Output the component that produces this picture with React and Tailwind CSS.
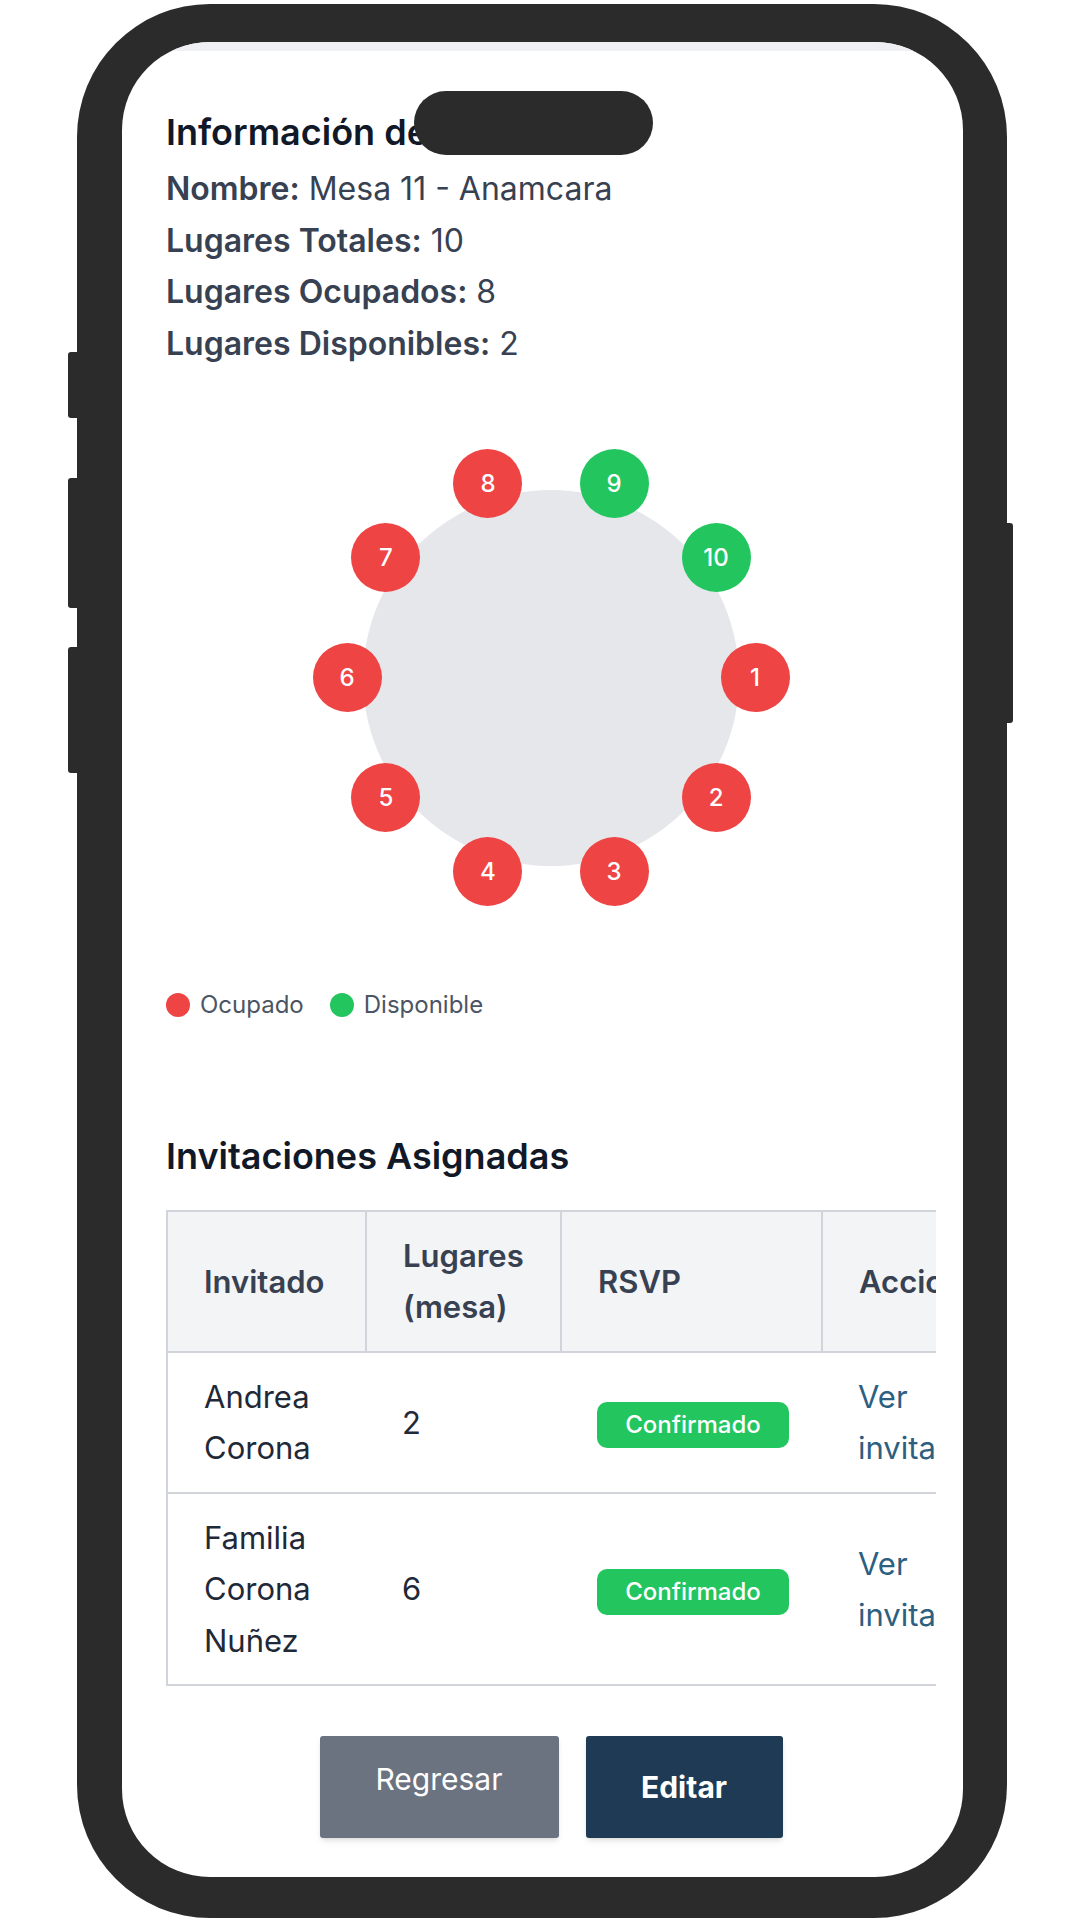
import React from "react";

const asientos = [
  { numero: 1, ocupado: true },
  { numero: 2, ocupado: true },
  { numero: 3, ocupado: true },
  { numero: 4, ocupado: true },
  { numero: 5, ocupado: true },
  { numero: 6, ocupado: true },
  { numero: 7, ocupado: true },
  { numero: 8, ocupado: true },
  { numero: 9, ocupado: false },
  { numero: 10, ocupado: false }
];

const invitaciones = [
  { id: 1, invitado: "Andrea Corona", lugares: 2, rsvp: "Confirmado" },
  { id: 2, invitado: "Familia Corona Nuñez", lugares: 6, rsvp: "Confirmado" }
];

// diagram box 480x460, table centre at (240, 230)
const CENTRO_X = 240;
const CENTRO_Y = 230;
const RADIO = 204;
const ASIENTO = 69;

function Mesa() {
  return (
    <div className="relative mx-auto w-[480px] h-[460px]">
      <div className="absolute left-[52px] top-[42px] w-[376px] h-[376px] rounded-full bg-[#e5e7eb]" />
      {asientos.map(function (asiento) {
        const angulo = ((asiento.numero - 1) * 36 * Math.PI) / 180;
        const x = CENTRO_X + RADIO * Math.cos(angulo) - ASIENTO / 2;
        const y = CENTRO_Y + RADIO * Math.sin(angulo) - ASIENTO / 2;
        return (
          <div
            key={asiento.numero}
            className={
              asiento.ocupado
                ? "absolute w-[69px] h-[69px] rounded-full bg-[#ef4444] flex items-center justify-center text-white text-[24px] font-medium"
                : "absolute w-[69px] h-[69px] rounded-full bg-[#22c55e] flex items-center justify-center text-white text-[24px] font-medium"
            }
            style={{ left: x, top: y }}
          >
            {asiento.numero}
          </div>
        );
      })}
    </div>
  );
}

export default function App() {
  return (
    <div className="w-[1080px] h-[1920px] bg-white overflow-hidden font-['Inter',sans-serif]">
      <div className="relative ml-[77px] mt-[4px] w-[930px] h-[1914px] rounded-[133px] bg-[#2b2b2b] pt-[38px] pl-[45px] pr-[44px] pb-[41px]">
        {/* side buttons */}
        <div className="absolute left-[-9px] top-[348px] w-[9px] h-[66px] rounded-l-[3px] bg-[#2b2b2b]" />
        <div className="absolute left-[-9px] top-[474px] w-[9px] h-[130px] rounded-l-[3px] bg-[#2b2b2b]" />
        <div className="absolute left-[-9px] top-[643px] w-[9px] h-[126px] rounded-l-[3px] bg-[#2b2b2b]" />
        <div className="absolute right-[-6px] top-[519px] w-[6px] h-[200px] rounded-r-[3px] bg-[#2b2b2b]" />

        <div className="relative w-full h-full rounded-[88px] overflow-hidden bg-white">
          <div className="absolute left-[292px] top-[49px] w-[239px] h-[64px] rounded-full bg-[#2b2b2b] z-10" />
          <div className="h-[9px] bg-[#eef0f3]" />

          <div className="pl-[44px] pr-[27px]">
            <h1 className="pt-[59px] text-[36px] leading-[44px] font-semibold text-[#111827]">
              Información de la Mesa
            </h1>

            <div className="mt-[9px] text-[32px] leading-[51.7px] text-[#374151]">
              <p>
                <span className="font-semibold">Nombre:</span> Mesa 11 - Anamcara
              </p>
              <p>
                <span className="font-semibold">Lugares Totales:</span> 10
              </p>
              <p>
                <span className="font-semibold">Lugares Ocupados:</span> 8
              </p>
              <p>
                <span className="font-semibold">Lugares Disponibles:</span> 2
              </p>
            </div>

            <div className="mt-[78px]">
              <Mesa />
            </div>

            <div className="mt-[82px] flex items-center gap-[10px] text-[24px] leading-[30px] text-[#4b5563]">
              <span className="w-[24px] h-[24px] rounded-full bg-[#ef4444]" />
              <span>Ocupado</span>
              <span className="ml-[16px] w-[24px] h-[24px] rounded-full bg-[#22c55e]" />
              <span>Disponible</span>
            </div>

            <h2 className="mt-[115px] text-[36px] leading-[42px] font-semibold text-[#111827]">
              Invitaciones Asignadas
            </h2>

            <div className="mt-[33px] w-[770px] overflow-hidden">
              <table className="table-fixed border-collapse w-[877px] border-2 border-[#d1d5db] text-[31px] leading-[51.5px]">
                <colgroup>
                  <col className="w-[199px]" />
                  <col className="w-[195px]" />
                  <col className="w-[261px]" />
                  <col className="w-[222px]" />
                </colgroup>
                <thead className="bg-[#f3f4f6] text-[#374151]">
                  <tr>
                    <th className="px-[36px] py-[18px] text-left font-semibold border-r-2 border-[#d1d5db]">Invitado</th>
                    <th className="px-[36px] py-[18px] text-left font-semibold border-r-2 border-[#d1d5db]">Lugares (mesa)</th>
                    <th className="px-[36px] py-[18px] text-left font-semibold border-r-2 border-[#d1d5db]">RSVP</th>
                    <th className="px-[36px] py-[18px] text-left font-semibold whitespace-nowrap">Acciones</th>
                  </tr>
                </thead>
                <tbody className="text-[#1f2937]">
                  {invitaciones.map(function (inv) {
                    return (
                      <tr key={inv.id} className="border-t-2 border-[#d1d5db]">
                        <td className="px-[36px] py-[18px] align-middle">{inv.invitado}</td>
                        <td className="px-[36px] py-[18px] align-middle">{inv.lugares}</td>
                        <td className="px-[36px] py-[18px] align-middle">
                          <span className="inline-flex items-center justify-center w-[192px] h-[46px] rounded-[10px] bg-[#22c55e] text-white text-[24px] font-medium leading-none">
                            {inv.rsvp}
                          </span>
                        </td>
                        <td className="px-[36px] py-[18px] align-middle text-[#2d5f80]">Ver invitación</td>
                      </tr>
                    );
                  })}
                </tbody>
              </table>
            </div>

            <div className="mt-[50px] flex justify-center gap-[27px]">
              <button className="w-[239px] h-[102px] rounded-[3px] bg-[#6b7280] text-white text-[30px] pb-[16px] shadow-md">
                Regresar
              </button>
              <button className="w-[197px] h-[102px] rounded-[3px] bg-[#1e3a54] text-white text-[30px] font-bold shadow-md">
                Editar
              </button>
            </div>
          </div>
        </div>
      </div>
    </div>
  );
}
